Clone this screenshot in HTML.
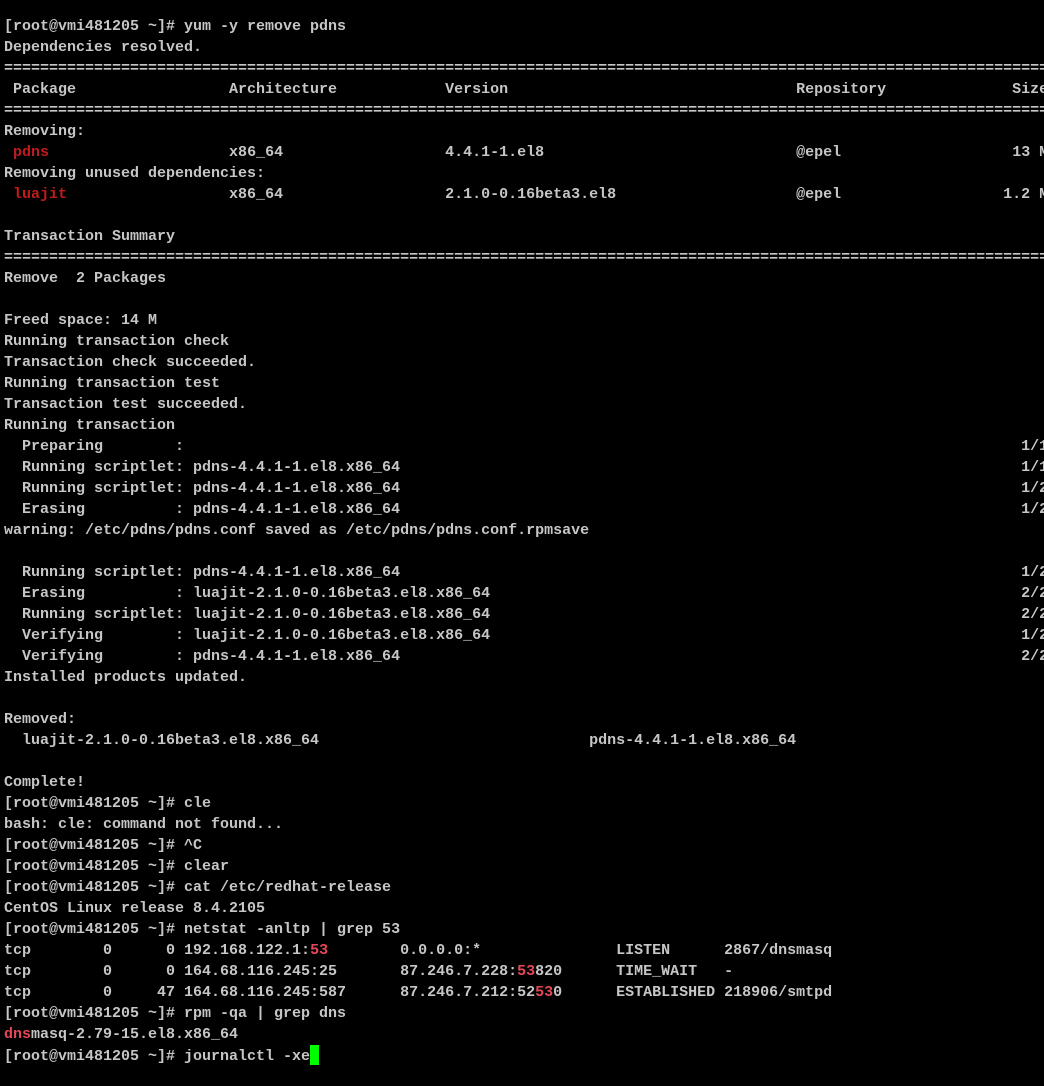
<!DOCTYPE html>
<html><head><meta charset="utf-8"><style>
html,body{margin:0;padding:0;background:#000;width:1044px;height:1086px;overflow:hidden}
pre{margin:0;padding:16px 0 0 4px;font-family:"Liberation Mono",monospace;font-weight:bold;font-size:15px;line-height:21px;color:#c6c6c6;white-space:pre;overflow:hidden;width:1040px}
.r{color:#c01c1c}.b{color:#e74856}
.c{display:inline-block;width:9px;height:20px;background:#00ff00;vertical-align:-5px}
</style></head><body><pre>[root@vmi481205 ~]# yum -y remove pdns
Dependencies resolved.
========================================================================================================================
 Package                 Architecture            Version                                Repository              Size
========================================================================================================================
Removing:
 <span class="r">pdns</span>                    x86_64                  4.4.1-1.el8                            @epel                   13 M
Removing unused dependencies:
 <span class="r">luajit</span>                  x86_64                  2.1.0-0.16beta3.el8                    @epel                  1.2 M

Transaction Summary
========================================================================================================================
Remove  2 Packages

Freed space: 14 M
Running transaction check
Transaction check succeeded.
Running transaction test
Transaction test succeeded.
Running transaction
  Preparing        :                                                                                             1/1
  Running scriptlet: pdns-4.4.1-1.el8.x86_64                                                                     1/1
  Running scriptlet: pdns-4.4.1-1.el8.x86_64                                                                     1/2
  Erasing          : pdns-4.4.1-1.el8.x86_64                                                                     1/2
warning: /etc/pdns/pdns.conf saved as /etc/pdns/pdns.conf.rpmsave

  Running scriptlet: pdns-4.4.1-1.el8.x86_64                                                                     1/2
  Erasing          : luajit-2.1.0-0.16beta3.el8.x86_64                                                           2/2
  Running scriptlet: luajit-2.1.0-0.16beta3.el8.x86_64                                                           2/2
  Verifying        : luajit-2.1.0-0.16beta3.el8.x86_64                                                           1/2
  Verifying        : pdns-4.4.1-1.el8.x86_64                                                                     2/2
Installed products updated.

Removed:
  luajit-2.1.0-0.16beta3.el8.x86_64                              pdns-4.4.1-1.el8.x86_64

Complete!
[root@vmi481205 ~]# cle
bash: cle: command not found...
[root@vmi481205 ~]# ^C
[root@vmi481205 ~]# clear
[root@vmi481205 ~]# cat /etc/redhat-release
CentOS Linux release 8.4.2105
[root@vmi481205 ~]# netstat -anltp | grep 53
tcp        0      0 192.168.122.1:<span class="b">53</span>        0.0.0.0:*               LISTEN      2867/dnsmasq
tcp        0      0 164.68.116.245:25       87.246.7.228:<span class="b">53</span>820      TIME_WAIT   -
tcp        0     47 164.68.116.245:587      87.246.7.212:52<span class="b">53</span>0      ESTABLISHED 218906/smtpd
[root@vmi481205 ~]# rpm -qa | grep dns
<span class="b">dns</span>masq-2.79-15.el8.x86_64
[root@vmi481205 ~]# journalctl -xe<span class="c"></span></pre></body></html>
